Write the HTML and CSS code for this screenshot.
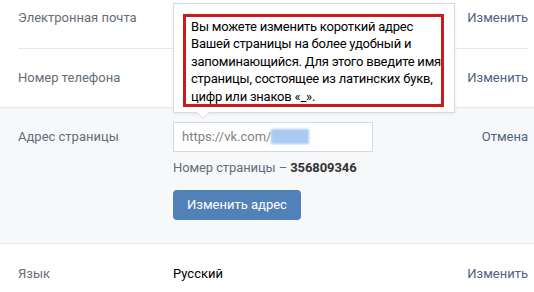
FILE: index.html
```html
<!DOCTYPE html>
<html lang="ru">
<head>
    <meta charset="UTF-8">
    <title>Настройки</title>
    <link rel="stylesheet" href="styles.css">
</head>
<body>
    <div class="settings">
        <div class="row row-first">
            <div class="label">Электронная почта</div>
            <div class="value"></div>
            <a class="action" href="#">Изменить</a>
        </div>

        <div class="row row-plain">
            <div class="label">Номер телефона</div>
            <div class="value"></div>
            <a class="action" href="#">Изменить</a>
        </div>

        <!-- Address edit block -->
        <div class="edit">
            <div class="label label-tall">Адрес страницы</div>
            <div class="value">
                <div class="url-field">https://vk.com/<span class="url-hidden"></span></div>
                <div class="hint">Номер страницы – <b>356809346</b></div>
                <button class="btn">Изменить адрес</button>
            </div>
            <a class="action action-tall" href="#">Отмена</a>
        </div>

        <div class="row row-last">
            <div class="label">Язык</div>
            <div class="value value-dark">Русский</div>
            <a class="action" href="#">Изменить</a>
        </div>

        <div class="tip">
            <div class="tip-mark">Вы можете изменить короткий адрес<br>
                Вашей страницы на более удобный и<br>
                запоминающийся. Для этого введите имя<br>
                страницы, состоящее из латинских букв,<br>
                цифр или знаков «_».</div>
        </div>
    </div>
</body>
</html>
```

FILE: styles.css
```css
body { margin: 0; background: #fff; font-family: Roboto, "Noto Sans", Arial, sans-serif; font-size: 13px; color: #000; }
.settings { position: relative; width: 534px; height: 292px; overflow: hidden; }

.row { display: flex; margin: 0 6px 0 18px; padding: 21px 0; line-height: 18px; }
.row-first { padding-top: 9px; border-bottom: 1px solid #e7e8ec; }
.row-plain { padding: 20px 0 20px; }
.label { width: 155px; flex-shrink: 0; color: #656d78; }
.value { flex: 1; }
.value-dark { color: #000; }
.action { color: #4d6380; text-decoration: none; }

.edit { display: flex; padding: 14px 6px 23px 18px; background: #f7f8fa; border-top: 1px solid #e7e8ec; border-bottom: 1px solid #e7e8ec; line-height: 18px; }
.label-tall, .action-tall { line-height: 30px; }

.url-field { box-sizing: border-box; width: 200px; height: 30px; padding: 0 8px; border: 1px solid #d3d9de; background: #fff; line-height: 28px; color: #828282; }
.url-hidden { display: inline-block; width: 38px; height: 15px; vertical-align: -3px; background: #a9caf2; filter: blur(1px); }
.hint { margin-top: 7px; color: #656d78; letter-spacing: -0.1px; }
.hint b { color: #333; }
.btn { display: block; margin-top: 13px; width: 128px; height: 30px; padding: 0; border: none; border-radius: 4px; background: #5181b8; color: #fff; font: inherit; font-size: 13px; }

.tip { position: absolute; left: 173px; top: 3px; width: 282px; height: 110px; box-sizing: border-box; padding: 10px 10px 0 9px; background: #fff; border: 1px solid #d5dbe2; box-shadow: 0 1px 3px rgba(0,0,0,0.08); }
.tip::before, .tip::after { content: ""; position: absolute; left: 22px; border: 7px solid transparent; border-bottom: none; }
.tip::before { bottom: -7px; border-top-color: #d5dbe2; }
.tip::after { bottom: -6px; border-top-color: #fff; }
.tip-mark { height: 93px; box-sizing: border-box; padding: 1px 0 0 5px; border: 3px solid #cc1b1f; line-height: 17.4px; color: #000; white-space: nowrap; letter-spacing: -0.22px; }
```
